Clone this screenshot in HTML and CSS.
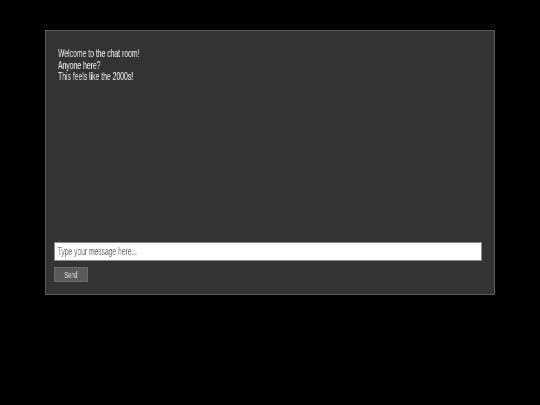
FILE: index.html
```html
<!DOCTYPE html>
<html>
<head>
<meta charset="utf-8">
<link rel="stylesheet" href="styles.css">
</head>
<body>
<div class="chat">
  <div class="messages">
    <div class="msg"><span class="narrow">Welcome to the chat room!</span></div>
    <div class="msg"><span class="narrow">Anyone here?</span></div>
    <div class="msg"><span class="narrow">This feels like the 2000s!</span></div>
  </div>
  <div class="composer">
    <div class="field-box">
      <input class="field" type="text" placeholder="Type your message here...">
    </div>
    <button class="send"><span class="narrow">Send</span></button>
  </div>
</div>
</body>
</html>
```
FILE: styles.css
```css
html, body {
  margin: 0;
  background: #000;
}
body {
  padding: 30px 0 0 45px;
  font-family: "Liberation Sans", Arial, sans-serif;
  -webkit-font-smoothing: antialiased;
}
.narrow {
  display: inline-block;
  transform: scaleX(0.65);
  transform-origin: left center;
  white-space: nowrap;
  will-change: transform;
}
.chat {
  box-sizing: border-box;
  width: 450px;
  height: 265px;
  background: #333;
  border: 1px solid #5a5a5a;
  display: flex;
  flex-direction: column;
  padding: 8px 12px 12px 8px;
}
.messages {
  flex: 1;
  padding: 9px 4px 8px;
  color: #f2f2f2;
  font-size: 10.5px;
  line-height: 11.5px;
}
.composer {
  display: flex;
  flex-direction: column;
  align-items: flex-start;
  gap: 6px;
}
.field-box {
  box-sizing: border-box;
  width: 428px;
  height: 19px;
  border: 1px solid #8a8a8a;
  background: #fff;
  overflow: hidden;
}
.field {
  display: block;
  box-sizing: border-box;
  width: 640px;
  height: 17px;
  margin: 0;
  border: none;
  background: transparent;
  padding: 0 4px;
  font-family: inherit;
  font-size: 10px;
  outline: none;
  transform: scaleX(0.67);
  transform-origin: left center;
  will-change: transform;
}
.field::placeholder {
  color: #6e6e6e;
}
.send {
  box-sizing: border-box;
  width: 34px;
  height: 15px;
  margin: 0;
  padding: 0;
  border: 1px solid #6a6a6a;
  background: #5a5a5a;
  color: #e6e6e6;
  font-family: inherit;
  font-size: 8.5px;
  display: flex;
  align-items: center;
  justify-content: center;
}
.send .narrow {
  transform-origin: center center;
}
```
